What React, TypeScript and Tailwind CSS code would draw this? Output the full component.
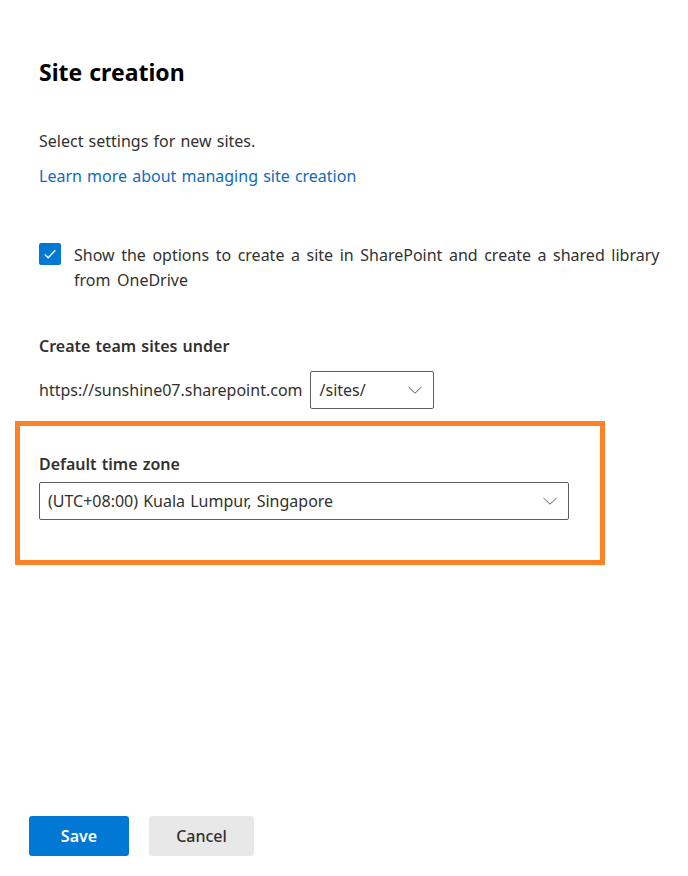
import React from "react";

function Chevron({ className = "" }: { className?: string }) {
  return (
    <svg width="16" height="16" viewBox="0 0 16 16" className={className} fill="none">
      <path d="M1.5 5 L8 11.2 L14.5 5" stroke="#605e5c" strokeWidth="1" />
    </svg>
  );
}

export default function App() {
  return (
    <div
      className="flex h-[876px] w-[688px] flex-col bg-white text-[16px] text-[#323130] [word-spacing:1px]"
      style={{ fontFamily: '"Noto Sans", "Open Sans", sans-serif' }}
    >
      <div className="flex flex-col pl-[39px]">
        <h1 className="mt-[58px] text-[23px] font-bold leading-[28px] text-[#000000]">Site creation</h1>
        <p className="mt-[44px] leading-[22px]">Select settings for new sites.</p>
        <a className="mt-[13px] leading-[22px] text-[#0f6cbd]" href="#">
          Learn more about managing site creation
        </a>
        <div className="mt-[56px] flex items-start gap-[13px]">
          <div className="flex h-[22px] w-[22px] shrink-0 items-center justify-center rounded-[2px] bg-[#0078d4]">
            <svg width="14" height="14" viewBox="0 0 14 14" fill="none">
              <path d="M1.8 7.4 L5.2 10.7 L12.3 3.3" stroke="white" strokeWidth="1.4" />
            </svg>
          </div>
          <p className="w-[600px] leading-[25px] [word-spacing:2.4px]">
            Show the options to create a site in SharePoint and create a shared library from OneDrive
          </p>
        </div>
        <p className="mt-[42px] font-semibold leading-[22px]">Create team sites under</p>
        <div className="mt-[14px] flex items-center gap-[7px]">
          <span className="leading-[22px]">https://sunshine07.sharepoint.com</span>
          <div className="flex h-[38px] w-[124px] items-center justify-between rounded-[2px] border border-[#605e5c] pl-[9px] pr-[10px]">
            <span>/sites/</span>
            <Chevron />
          </div>
        </div>
      </div>
      <div className="ml-[15px] mt-[12px] w-[590px] border-[5px] border-[#ff8326] pb-[40px] pl-[19px] pt-[27px]">
        <p className="font-semibold leading-[22px]">Default time zone</p>
        <div className="mt-[7px] flex h-[38px] w-[530px] items-center justify-between rounded-[2px] border border-[#605e5c] pl-[8px] pr-[10px]">
          <span>(UTC+08:00) Kuala Lumpur, Singapore</span>
          <Chevron />
        </div>
      </div>
      <div className="mt-auto mb-[20px] flex gap-[20px] pl-[29px]">
        <button className="h-[40px] w-[100px] rounded-[3px] bg-[#0078d4] font-semibold text-white">Save</button>
        <button className="h-[40px] w-[105px] rounded-[3px] bg-[#e8e8e8] font-medium text-[#323130]">Cancel</button>
      </div>
    </div>
  );
}
